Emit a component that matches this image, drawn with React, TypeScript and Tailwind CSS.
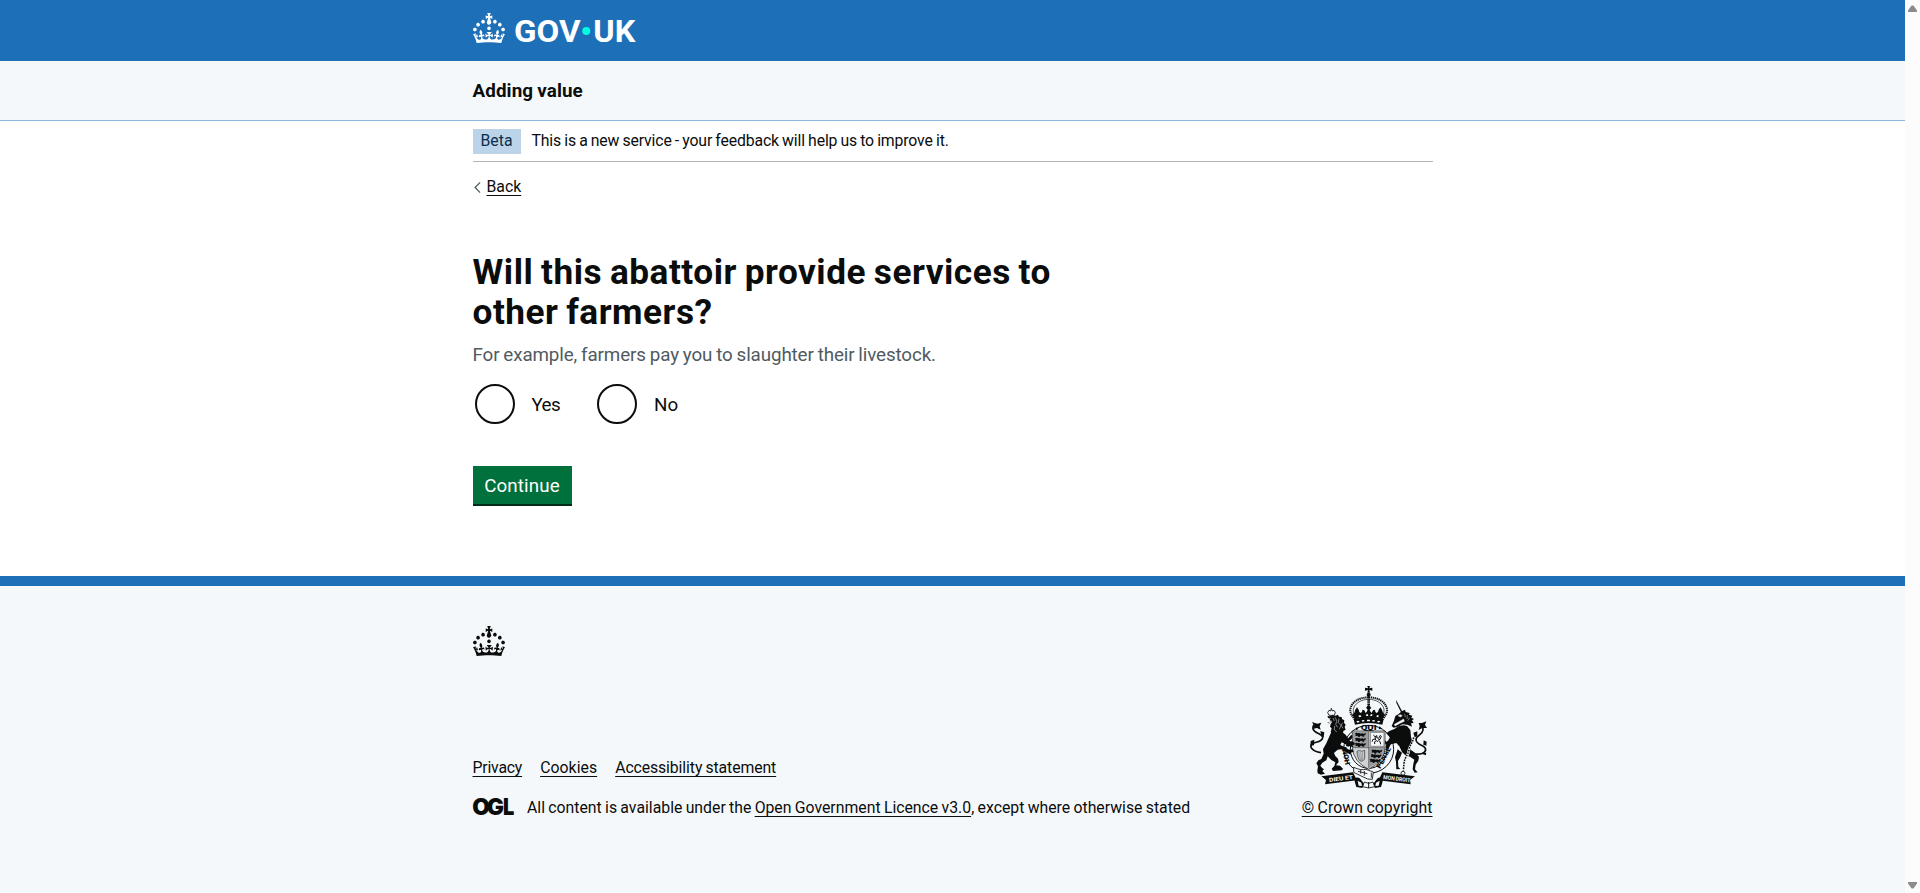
import type { ReactNode } from 'react';

const CROWN =
  'M22.6 10.4c-1 .4-2-.1-2.4-1-.4-.9.1-2 1-2.4.9-.4 2 .1 2.4 1s-.1 2-1 2.4m-5.9 6.7c-.9.4-2-.1-2.4-1-.4-.9.1-2 1-2.4.9-.4 2 .1 2.4 1s-.1 2-1 2.4m10.8-3.7c-1 .4-2-.1-2.4-1-.4-.9.1-2 1-2.4.9-.4 2 .1 2.4 1s0 2-1 2.4m3.3 4.8c-1 .4-2-.1-2.4-1-.4-.9.1-2 1-2.4.9-.4 2 .1 2.4 1s-.1 2-1 2.4M17 4.7l2.3 1.2V2.5l-2.3.7-.2-.2.9-3h-3.4l.9 3-.2.2c-.1.1-2.3-.7-2.3-.7v3.4L15 4.7c.1.1.1.2.2.2l-1.3 4c-.1.2-.1.4-.1.6 0 1.1.8 2 1.9 2.2h.7c1-.2 1.9-1.1 1.9-2.1 0-.2 0-.4-.1-.6l-1.3-4c-.1-.2 0-.2.1-.3m-7.6 5.7c.9.4 2-.1 2.4-1 .4-.9-.1-2-1-2.4-.9-.4-2 .1-2.4 1s0 2 1 2.4m-5 3c.9.4 2-.1 2.4-1 .4-.9-.1-2-1-2.4-.9-.4-2 .1-2.4 1s.1 2 1 2.4m-3.2 4.8c.9.4 2-.1 2.4-1 .4-.9-.1-2-1-2.4-.9-.4-2 .1-2.4 1s0 2 1 2.4m14.8 11c4.4 0 8.6.3 12.3.8 1.1-4.5 2.4-7 3.7-8.8l-2.5-.9c.2 1.3.3 1.9 0 2.7-.4-.4-.8-1.1-1.1-2.3l-1.2 4c.7-.5 1.3-.8 2-.9-1.1 2.5-2.6 3.1-3.5 3-1.1-.2-1.7-1.2-1.5-2.1.3-1.2 1.5-1.5 2.1-.1 1.1-2.3-.8-3-2-2.3 1.9-1.9 2.1-3.5.6-5.6-2.1 1.6-2.1 3.2-1.2 5.5-1.2-1.4-3.2-.6-2.5 1.6.9-1.4 2.1-.5 1.9.8-.2 1.1-1.7 2.1-3.5 1.9-2.7-.2-2.9-2.1-2.9-3.6.7-.1 1.9.5 2.9 1.9l.4-4.3c-1.1 1.1-2.1 1.4-3.2 1.4.4-1.2 2.1-3 2.1-3h-5.4s1.7 1.9 2.1 3c-1.1 0-2.1-.2-3.2-1.4l.4 4.3c1-1.4 2.2-2 2.9-1.9-.1 1.5-.2 3.4-2.9 3.6-1.9.2-3.4-.8-3.5-1.9-.2-1.3 1-2.2 1.9-.8.7-2.3-1.2-3-2.5-1.6.9-2.2.9-3.9-1.2-5.5-1.5 2-1.3 3.7.6 5.6-1.2-.7-3.1 0-2 2.3.6-1.4 1.8-1.1 2.1.1.2.9-.3 1.9-1.5 2.1-.9.2-2.4-.5-3.5-3 .6 0 1.2.3 2 .9l-1.2-4c-.3 1.1-.7 1.9-1.1 2.3-.3-.8-.2-1.4 0-2.7l-2.9.9C1.3 23 2.6 25.5 3.7 30c3.7-.5 7.9-.8 12.3-.8';

function Crown() {
  return (
    <svg width="32" height="30" viewBox="0 0 32 30" className="block shrink-0" aria-hidden="true">
      <path fill="currentColor" fillRule="evenodd" d={CROWN} />
    </svg>
  );
}

function Logo() {
  return (
    <svg width="180" height="46" viewBox="0 -6 180 46" className="block text-white" aria-label="GOV.UK">
      <path fill="currentColor" fillRule="evenodd" d={CROWN} />
      <g fill="currentColor" className="font-[Roboto,sans-serif] text-[31px] font-bold">
        <text x="41" y="29" textLength="66.5" lengthAdjust="spacingAndGlyphs">GOV</text>
        <text x="120.3" y="29" textLength="42" lengthAdjust="spacingAndGlyphs">UK</text>
      </g>
      <circle cx="113.3" cy="18" r="4" fill="#00ffe0" />
    </svg>
  );
}

function Lions({ x, y }: { x: number; y: number }) {
  return (
    <path
      transform={`translate(${x} ${y})`}
      d="M2 5q4-5 8-1l4-1 5 2 5-1 5 2 3-3 3 2-3 5-4 1 2 3h-5l-3-3-6 1 1 3h-5l-2-4-4 1-4-2 3-2z"
    />
  );
}

function RoyalArms() {
  return (
    <svg width="118" height="104" viewBox="59 29 354 312" className="block" aria-hidden="true" fill="#0b0c0c">
      {/* imperial crown */}
      <path d="M231 32h8l-2 7 9-2v9l-9-2 2 8h-8l2-8-9 2v-9l9 2z" />
      <circle cx="235" cy="58" r="6" />
      <g fill="none" stroke="#0b0c0c">
        <path d="M235 66c-28 0-52 14-55 36-1 12 6 20 13 30M235 66c28 0 52 14 55 36 1 12-6 20-13 30" strokeWidth="6" strokeDasharray="4 2" />
        <path d="M235 72c-22 0-43 12-46 30-1 10 3 16 8 25M235 72c22 0 43 12 46 30 1 10-3 16-8 25" strokeWidth="2" />
        <path d="M235 64v36" strokeWidth="8" strokeDasharray="4 1.5" />
      </g>
      <path d="M186 116q8-3 9-13l5-7 5 7q0 8 7 10 5-5 4-10l6 2 4 8q5-4 6-10l-5-6 8-8 8 8-5 6q1 6 6 10l4-8 6-2q-1 5 4 10 7-2 7-10l5-7 5 7q1 10 9 13l-7 16q-42-9-84 0z" />
      <path d="M190 132q45-12 90 0l-4 16q-41-10-82 0z" />
      <path d="M198 138l7-2 3 4-7 2zM214 135l7-1 2 4-7 1zM230 133h9v5h-9zM247 134l7 1-2 4-7-1zM263 136l7 2-4 4-6-2z" fill="#f4f8fb" />
      <path d="M204 121l6-2 3 5-6 2zM226 118l6-2 2 6h-6zM242 116l5 2-2 4h-6zM260 119l6 2-3 5-5-2z" fill="#f4f8fb" />

      {/* garter */}
      <ellipse cx="235" cy="222" rx="75" ry="72" fill="#f4f8fb" stroke="#0b0c0c" strokeWidth="3" />
      <ellipse cx="235" cy="222" rx="55" ry="57" fill="none" stroke="#0b0c0c" strokeWidth="3" />
      <g className="font-[Roboto,sans-serif] text-[21px] font-black">
        <text x="211" y="165" textLength="48" lengthAdjust="spacingAndGlyphs">QUI</text>
        <text transform="translate(180 266) rotate(-103)" textLength="54" lengthAdjust="spacingAndGlyphs">HONI</text>
        <text transform="translate(270 281) rotate(-62)" textLength="70" lengthAdjust="spacingAndGlyphs">PENSE</text>
      </g>
      <path d="M198 156l7 5-9 4zM267 153l9 7-11 2zM169 203l10 3-3 8-9-2zM171 192l12-14 6 6-11 12z" />

      {/* shield */}
      <path d="M186 167h98v49q-2 43-49 66-47-23-49-66z" fill="#cfd3d5" stroke="#0b0c0c" strokeWidth="2" />
      <path d="M188 169h46v47h-46z" fill="#9a9d9f" />
      <Lions x={192} y={170} />
      <Lions x={192} y={185} />
      <Lions x={192} y={200} />
      <path d="M236 219h46q-4 38-46 59z" fill="#9a9d9f" />
      <Lions x={241} y={220} />
      <Lions x={239} y={234} />
      <Lions x={236} y={248} />
      <path d="M240 171h41v42h-41z" fill="#f4f8fb" stroke="#888" strokeWidth="3" />
      <path
        d="M249 179l5 5 6-3-1 6 6 2 5-9 3 3-4 9-5 2 5 5 2 8M263 199l-5-3-5 3v7M254 191l-7 2-2 6M254 184l2 10"
        fill="none"
        stroke="#0b0c0c"
        strokeWidth="3"
      />
      <g fill="none" stroke="#444" strokeWidth="2.5">
        <path d="M200 228c8-6 14 4 23-3v22c-1 8-7 12-13 10-6-4-9-16-10-29z" />
        <path d="M205 230l6 26M211 230l3 25M217 230v24" strokeWidth="1.2" />
        <path d="M235 168v110M188 217h94" strokeWidth="2" />
      </g>

      {/* lion supporter */}
      <path d="M112 112l4-7 5 2 2-8 3 8 5-2 4 6-3 9h-16z" fill="none" stroke="#0b0c0c" strokeWidth="2.5" />
      <path d="M111 122l8 1 6-3 10 1 8-3 3 6 8 1 1 6 7 4-1 7 5 6-3 7 3 8-7 4-1 9-9-1-8 5-8-6-9 2-3-7 3-10-5-5 2-7-9-4 2-5-5-6 5-3z" />
      <path d="M110 128l10 1 4 6-6 2 8 2-5 7-10-2 4-3-8-3z" fill="#f4f8fb" />
      <path d="M118 130l6 1 2 3-6 1zM114 141l7-1" stroke="#0b0c0c" strokeWidth="1" />
      <g stroke="#f4f8fb" strokeWidth="1.5" fill="none">
        <path d="M134 126l6 11-4 10 6 9M146 130l-2 12 8 8-5 12M133 152l-1 10 7 8M156 142l-3 8 5 9M128 128l4 9" />
      </g>
      <path d="M122 172l30-4 14 10 13 20 11 2 5 7-9 3 4 6-12-3-14-7-10-5-4 8 13 6 13 8 11-1 3 7-9 3-1 6-12-8-15-8-11 1-11 10 4 9 8 8 2 10-8 10 12 1 9 9-3 5-27 2-4-7 8-8 3-11-12-7-11-11-4 12-12 7-6 9 5 6 6 5-5 5 8 8-12 3-10-4-1-8 2-13-5-9 6-9 9-4 7-16-2-13 10-18z" />
      <path d="M92 232C62 228 57 212 66 205c8-6 29-3 31-18 1-12-25-12-29-27-1-5 1-9 4-13" fill="none" stroke="#0b0c0c" strokeWidth="5" />
      <path d="M64 140l17 5 12-3-5 11 3 10-11-5-13 3 5-11zM90 167l12 4-2 15-7-3zM72 193l-11 4-1 14 11-1z" />

      {/* unicorn supporter */}
      <path d="M317 74l4 7 15 28-4 2-14-29z" />
      <path d="M325 116l9-8 10-5 2 7 12 3-2 5 10 3-3 6 8 4-6 4 5 8-8 1 3 10-14-6-15-1-13 7-13 3-6-5 7-16 4-14z" />
      <path d="M323 121l7-3 6 3-6 4zM312 147l14-8 14-8 2 7-13 6-15 8zM342 115l4 11M351 119l-1 12M358 127l-6 9" fill="#f4f8fb" stroke="#f4f8fb" strokeWidth="1.3" />
      <path d="M316 158q16-12 34-6l10 12 2 20 4 16-7 12 3 12 14 10 10 10-2 12-8 12-2 14 8 9-9 1-6-10 2-17 3-12-13-9-14-4-10-10-8-17-9-10-16 4-9 15-8-6 4-8-6-6 10-6 6-10-11-12 9-7 17-7z" />
      <path d="M322 222l13 10-5 13-7 12 1 18 6 6-12 1-1-22-3-14z" />
      <path d="M370 190c-2 14-12 20-14 34-2 18-13 22-15 42l-2 24" fill="none" stroke="#f4f8fb" strokeWidth="8" />
      <path d="M370 186c-2 16-12 22-14 36-2 18-13 22-15 42l-2 22" fill="none" stroke="#0b0c0c" strokeWidth="4.5" strokeDasharray="5 3" />
      <circle cx="338" cy="294" r="6" fill="none" stroke="#0b0c0c" strokeWidth="2.5" />
      <path d="M375 236c25 3 35-9 29-19-7-10-25-8-27-23-1-14 20-15 21-30l-1-14" fill="none" stroke="#0b0c0c" strokeWidth="5" />
      <path d="M408 138l-13 5-10 0 3 9-3 12 11-6 14 0-6-9zM381 168l-12 4 4 14 8-3zM400 195l9 4-1 12-9-3zM399 230l9 3-2 7-10-4z" />

      {/* buckle and motto ribbon */}
      <path d="M190 276q22 10 37 6l22 8-3 22-14-1q-20-9-42-20z" fill="#f4f8fb" stroke="#0b0c0c" strokeWidth="2.5" />
      <path d="M203 288l28 7M211 283v12M222 287v14M243 292v15" fill="none" stroke="#0b0c0c" strokeWidth="2.5" />
      <path d="M93 303l95-12 12 24-96 12 3-13z" />
      <path d="M374 303l-98-12-11 24 96 12-2-13z" />
      <path d="M192 310q12-8 20 3l10 14-6 11-18-3-4-13zM278 310q-12-8-20 3l-10 14 6 11 18-3 4-13z" />
      <path d="M202 316l11 6 2 10-10-1zM268 316l-11 6-2 10 10-1z" fill="#f4f8fb" />
      <path d="M222 320q13 8 26 0l5 14q-18 8-36 0z" fill="#f4f8fb" stroke="#0b0c0c" strokeWidth="2.5" />
      <path d="M235 320v18" stroke="#0b0c0c" strokeWidth="3" />
      <g fill="#f4f8fb" className="font-[Roboto,sans-serif] text-[17px] font-bold">
        <text transform="translate(117 320) rotate(-7)" textLength="72" lengthAdjust="spacingAndGlyphs">DIEU ET</text>
        <text transform="translate(278 311) rotate(7)" textLength="82" lengthAdjust="spacingAndGlyphs">MON DROIT</text>
      </g>
    </svg>
  );
}

function Link({ children, className = '' }: { children: ReactNode; className?: string }) {
  return (
    <a href="#" className={`underline decoration-1 underline-offset-[3px] decoration-[#0b0c0c] ${className}`}>
      {children}
    </a>
  );
}

function Radio({ label, className }: { label: string; className: string }) {
  return (
    <label className="flex items-center">
      <input type="radio" name="services" className="size-10 appearance-none rounded-full border-2 border-[#0b0c0c] bg-white" />
      <span className={`pt-[2px] text-[18.8px] leading-[25px] ${className}`}>{label}</span>
    </label>
  );
}

function Container({ children, className = '' }: { children: ReactNode; className?: string }) {
  return <div className={`mx-auto w-[960px] ${className}`}>{children}</div>;
}

export default function App() {
  return (
    <div className="flex h-[893px] overflow-hidden bg-white font-[Roboto,'Liberation_Sans',sans-serif] text-[15.8px] leading-5 [word-spacing:-0.6px] text-[#0b0c0c]">
      <div className="flex w-[1905px] flex-col">
        <header>
          <div className="h-[61px] bg-[#1d70b8]">
            <Container className="pt-[7px]">
              <Logo />
            </Container>
          </div>
          <div className="h-[60px] border-b border-[#8eb8dc] bg-[#f4f8fb]">
            <Container className="flex h-full items-center text-[18.8px] font-bold tracking-[0.1px]">Adding value</Container>
          </div>
        </header>

        <Container className="h-[455px] shrink-0">
          <div className="flex items-start gap-[11px] border-b border-[#b1b4b6] pt-2 pb-[7px]">
            <strong className="flex h-[25px] w-12 justify-center bg-[#bbd4ea] pt-[2px] font-normal text-[#0c2d4a]">Beta</strong>
            <span className="pt-[2px] tracking-[-0.14px]">This is a new service - your feedback will help us to improve it.</span>
          </div>
          <div className="mt-[15px] flex items-center">
            <svg width="14" height="20" viewBox="0 0 14 20" fill="none" stroke="#505a5f" strokeWidth="1.3" aria-hidden="true">
              <path d="M7.1 5.4 2.1 10.5l5 5.1" />
            </svg>
            <Link>Back</Link>
          </div>
          <h1 className="mt-[55px] w-[640px] text-[35.2px] leading-10 font-bold tracking-[0.52px] [word-spacing:-1.5px]">
            Will this abattoir provide services to<br />other farmers?
          </h1>
          <p className="mt-[11px] text-[18.8px] leading-[25px] tracking-[-0.12px] text-[#505a5f]">
            For example, farmers pay you to slaughter their livestock.
          </p>
          <div className="mt-4 flex pl-[2px]">
            <Radio label="Yes" className="w-[82px] pl-[17px] tracking-[-0.6px]" />
            <Radio label="No" className="pl-[17.5px]" />
          </div>
          <button className="mt-[42px] block h-[38px] w-[99px] bg-[#00703c] pt-px text-[18.8px] tracking-[0.1px] text-white shadow-[0_2px_0_#002d18]">
            Continue
          </button>
        </Container>

        <footer className="flex-1 border-t-[10px] border-[#1d70b8] bg-[#f4f8fb] pt-10">
          <Container>
            <Crown />
            <div className="mt-[29px] flex items-end justify-between">
              <div>
                <nav className="flex gap-[18px]">
                  <Link className="tracking-[-0.2px]">Privacy</Link>
                  <Link className="tracking-[0.05px]">Cookies</Link>
                  <Link className="tracking-[-0.1px]">Accessibility statement</Link>
                </nav>
                <div className="mt-5 flex">
                  <svg width="42" height="20" viewBox="0 0 42 20" className="mr-[12.5px] block overflow-visible" aria-label="OGL">
                    <g className="font-[Inter,sans-serif] text-[23px] font-black" fill="#0b0c0c">
                      <text x="-0.8" y="17" textLength="17.6" lengthAdjust="spacingAndGlyphs">O</text>
                      <text x="13.8" y="17" textLength="17.2" lengthAdjust="spacingAndGlyphs">G</text>
                      <text x="30" y="17" textLength="11.3" lengthAdjust="spacingAndGlyphs">L</text>
                    </g>
                  </svg>
                  <span>
                    All content is available under the <Link>Open Government Licence v3.0</Link>, except where otherwise stated
                  </span>
                </div>
              </div>
              <div className="flex flex-col items-end">
                <div className="mr-[5px]">
                  <RoyalArms />
                </div>
                <Link className="mt-[9px] tracking-[0.07px]">© Crown copyright</Link>
              </div>
            </div>
          </Container>
        </footer>
      </div>

      <div className="flex w-[15px] flex-col items-center justify-between bg-[#fcfcfc] pt-[5px] pb-[4px]">
        <svg width="9" height="7" viewBox="0 0 9 7" fill="#8b8b8b" aria-hidden="true">
          <path d="M3.6.4h1.8L9 5.5V7H0V5.5z" />
        </svg>
        <svg width="9" height="7" viewBox="0 0 9 7" fill="#8b8b8b" aria-hidden="true">
          <path d="M3.6 6.6h1.8L9 1.5V0H0v1.5z" />
        </svg>
      </div>
    </div>
  );
}
